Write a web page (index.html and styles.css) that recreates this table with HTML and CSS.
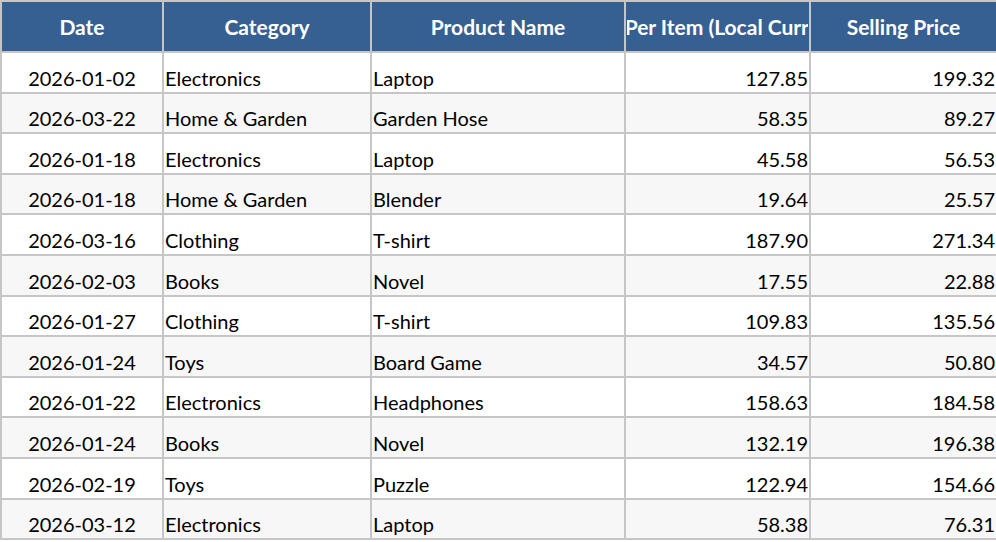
FILE: index.html
```html
<!DOCTYPE html>
<html>
<head>
<meta charset="utf-8">
<link rel="stylesheet" href="styles.css">
</head>
<body>
<table class="sheet">
  <colgroup>
    <col class="c-date"><col class="c-cat"><col class="c-prod"><col class="c-cost"><col class="c-sell">
  </colgroup>
  <thead>
    <tr>
      <th>Date</th><th>Category</th><th>Product Name</th><th class="clip"><div class="clipbox">Cost Per Item (Local Currency)</div></th><th>Selling Price</th>
    </tr>
  </thead>
  <tbody>
    <tr><td class="ctr">2026-01-02</td><td>Electronics</td><td>Laptop</td><td class="num">127.85</td><td class="num">199.32</td></tr>
    <tr><td class="ctr">2026-03-22</td><td>Home &amp; Garden</td><td>Garden Hose</td><td class="num">58.35</td><td class="num">89.27</td></tr>
    <tr><td class="ctr">2026-01-18</td><td>Electronics</td><td>Laptop</td><td class="num">45.58</td><td class="num">56.53</td></tr>
    <tr><td class="ctr">2026-01-18</td><td>Home &amp; Garden</td><td>Blender</td><td class="num">19.64</td><td class="num">25.57</td></tr>
    <tr><td class="ctr">2026-03-16</td><td>Clothing</td><td>T-shirt</td><td class="num">187.90</td><td class="num">271.34</td></tr>
    <tr><td class="ctr">2026-02-03</td><td>Books</td><td>Novel</td><td class="num">17.55</td><td class="num">22.88</td></tr>
    <tr><td class="ctr">2026-01-27</td><td>Clothing</td><td>T-shirt</td><td class="num">109.83</td><td class="num">135.56</td></tr>
    <tr><td class="ctr">2026-01-24</td><td>Toys</td><td>Board Game</td><td class="num">34.57</td><td class="num">50.80</td></tr>
    <tr><td class="ctr">2026-01-22</td><td>Electronics</td><td>Headphones</td><td class="num">158.63</td><td class="num">184.58</td></tr>
    <tr><td class="ctr">2026-01-24</td><td>Books</td><td>Novel</td><td class="num">132.19</td><td class="num">196.38</td></tr>
    <tr><td class="ctr">2026-02-19</td><td>Toys</td><td>Puzzle</td><td class="num">122.94</td><td class="num">154.66</td></tr>
    <tr><td class="ctr">2026-03-12</td><td>Electronics</td><td>Laptop</td><td class="num">58.38</td><td class="num">76.31</td></tr>
  </tbody>
</table>
</body>
</html>
```
FILE: styles.css
```css
html, body {
  margin: 0;
  padding: 0;
  background: #ffffff;
}
.sheet {
  border-collapse: collapse;
  table-layout: fixed;
  width: 996px;
  font-family: Lato, "Liberation Sans", sans-serif;
  color: #000;
}
.c-date { width: 162px; }
.c-cat { width: 208px; }
.c-prod { width: 254px; }
.c-cost { width: 185px; }
.c-sell { width: 187px; }
.sheet th, .sheet td {
  border: 2px solid #c6c6c6;
  padding: 0 1px;
  overflow: hidden;
  white-space: nowrap;
}
.sheet th {
  background: #366092;
  color: #fff;
  font-weight: bold;
  font-size: 21px;
  height: 49px;
  text-align: center;
  vertical-align: middle;
}
.sheet td {
  font-size: 20px;
  height: 36.6px;
  vertical-align: bottom;
  padding-bottom: 2px;
  text-align: left;
}
.sheet tbody tr:nth-child(even) td {
  background: #f7f7f7;
}
.sheet td.ctr { text-align: center; }
.sheet td.num { text-align: right; }
.clipbox {
  display: flex;
  justify-content: center;
  white-space: nowrap;
  overflow: hidden;
}
```
